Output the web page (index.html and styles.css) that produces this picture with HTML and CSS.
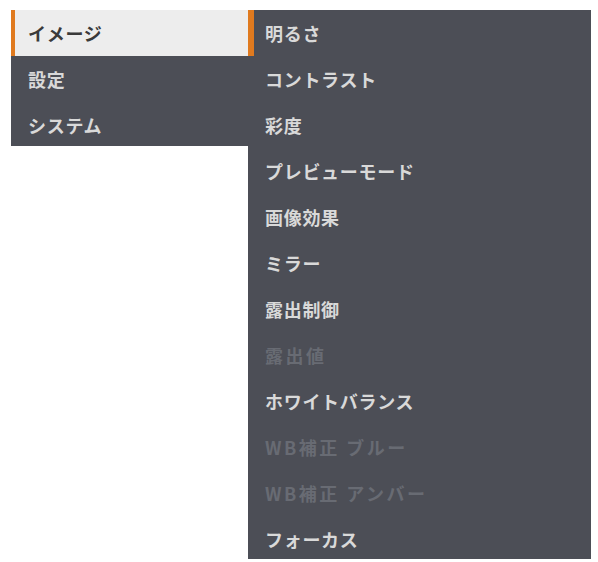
FILE: index.html
```html
<!DOCTYPE html>
<html lang="ja">
<head>
<meta charset="utf-8">
<link rel="stylesheet" href="styles.css">
</head>
<body>
<div class="screen">
  <ul class="menu main">
    <li class="item active">イメージ</li>
    <li class="item">設定</li>
    <li class="item">システム</li>
  </ul>
  <ul class="menu sub">
    <li class="item current">明るさ</li>
    <li class="item">コントラスト</li>
    <li class="item">彩度</li>
    <li class="item">プレビューモード</li>
    <li class="item">画像効果</li>
    <li class="item">ミラー</li>
    <li class="item">露出制御</li>
    <li class="item disabled">露出値</li>
    <li class="item">ホワイトバランス</li>
    <li class="item disabled">WB補正 ブルー</li>
    <li class="item disabled">WB補正 アンバー</li>
    <li class="item">フォーカス</li>
  </ul>
</div>
</body>
</html>
```
FILE: styles.css
```css
html, body {
  margin: 0;
  padding: 0;
  background: #ffffff;
}
.screen {
  display: flex;
  align-items: flex-start;
  padding: 10px 0 0 11px;
  font-family: "Noto Sans CJK JP", "Noto Sans", sans-serif;
  font-weight: 700;
  font-size: 18px;
}
.menu {
  list-style: none;
  margin: 0;
  padding: 0;
  background: #4c4e56;
  overflow: hidden;
}
.main {
  width: 237px;
  height: 136px;
}
.sub {
  width: 343px;
  height: 549px;
}
.item {
  height: 46px;
  line-height: 46px;
  color: #d9d9d9;
  letter-spacing: 0.7px;
  box-sizing: border-box;
}
.main .item {
  padding-left: 17px;
}
.main .active {
  background: #ededed;
  color: #3a3a3a;
  border-left: 4px solid #e07a1f;
  padding-left: 13px;
}
.sub .item {
  padding-left: 17px;
}
.sub .current {
  border-left: 6px solid #e07a1f;
  padding-left: 11px;
}
.sub .disabled {
  color: #686b73;
  letter-spacing: 2.5px;
}
```
